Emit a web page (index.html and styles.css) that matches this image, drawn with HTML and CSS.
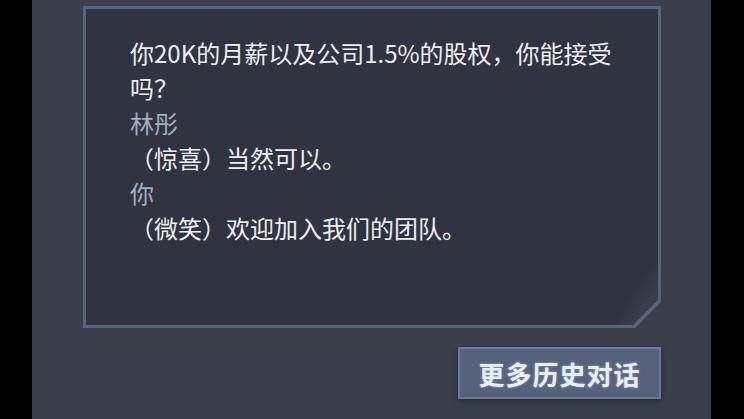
FILE: index.html
```html
<!DOCTYPE html>
<html lang="zh-CN">
<head>
    <meta charset="UTF-8">
    <meta name="viewport" content="width=device-width, initial-scale=1.0">
    <title>对话记录</title>
    <link rel="stylesheet" href="styles.css">
</head>
<body>
    <div class="stage">
        <div class="dialog">
            <div class="dialog-inner">
                <p class="line">你20K的月薪以及公司1.5%的股权，你能接受吗？</p>
                <p class="speaker">林彤</p>
                <p class="line">（惊喜）当然可以。</p>
                <p class="speaker">你</p>
                <p class="line">（微笑）欢迎加入我们的团队。</p>
            </div>
        </div>
        <div class="actions">
            <button class="history-btn">更多历史对话</button>
        </div>
    </div>
</body>
</html>
```

FILE: styles.css
```css
* {
    box-sizing: border-box;
    margin: 0;
    padding: 0;
}

body {
    background-color: #000;
    font-family: "Noto Sans CJK SC", "Noto Sans", sans-serif;
    overflow: hidden;
}

.stage {
    margin: 0 33px 0 32px;
    height: 419px;
    background-color: #393f4b;
    padding: 6px 0 0 51px;
}

/* box with the clipped bottom-right corner */
.dialog {
    width: 578px;
    height: 322px;
    padding: 3px;
    background-color: #58647c;
    clip-path: polygon(0 0, 100% 0, 100% calc(100% - 26px), calc(100% - 26px) 100%, 0 100%);
}

.dialog-inner {
    position: relative;
    height: 100%;
    background-color: #2f3440;
    padding: 26px 39px 0 44px;
    clip-path: polygon(0 0, 100% 0, 100% calc(100% - 25px), calc(100% - 25px) 100%, 0 100%);
}

.dialog-inner::after {
    content: "";
    position: absolute;
    right: 0;
    bottom: 0;
    width: 40px;
    height: 60px;
    background: linear-gradient(to top left, rgba(90, 104, 128, 0.35), rgba(90, 104, 128, 0) 60%);
}

.line,
.speaker {
    font-size: 24px;
    line-height: 35px;
}

.line {
    color: #eceef2;
}

.speaker {
    color: #a3aec2;
}

.actions {
    width: 578px;
    display: flex;
    justify-content: flex-end;
    margin-top: 19px;
}

.history-btn {
    width: 203px;
    height: 52px;
    background-color: #56627a;
    border: 2px solid #6e7a92;
    box-shadow: 0 2px 6px rgba(0, 0, 0, 0.35);
    color: #e8eef8;
    font-family: "Noto Sans CJK SC", sans-serif;
    font-size: 26px;
    font-weight: 700;
    letter-spacing: 1px;
    text-shadow: 0 0 3px rgba(200, 215, 240, 0.5);
    cursor: pointer;
}
```
